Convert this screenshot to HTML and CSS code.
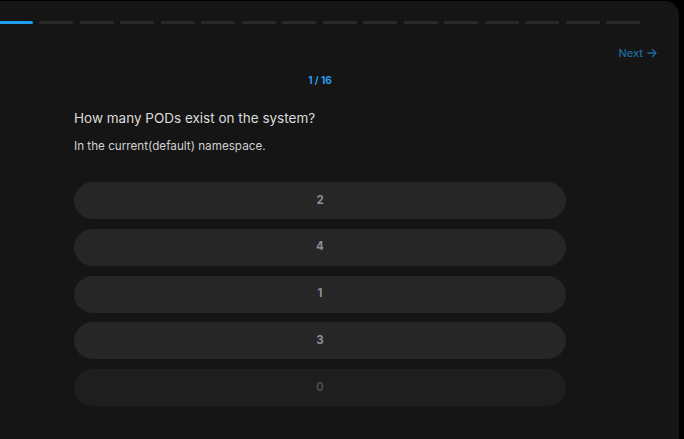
FILE: index.html
```html
<!DOCTYPE html>
<html lang="en">
<head>
<meta charset="utf-8">
<title>Quiz</title>
<link rel="stylesheet" href="styles.css">
</head>
<body>
<div class="card">
  <div class="progress">
    <span class="seg active"></span>
    <span class="seg"></span><span class="seg"></span><span class="seg"></span>
    <span class="seg"></span><span class="seg"></span><span class="seg"></span>
    <span class="seg"></span><span class="seg"></span><span class="seg"></span>
    <span class="seg"></span><span class="seg"></span><span class="seg"></span>
    <span class="seg"></span><span class="seg"></span><span class="seg"></span>
  </div>
  <div class="nav">
    <a class="next">Next
      <svg class="arrow" width="10" height="10" viewBox="0 0 10 10"><path d="M1 5h8M5.5 1.5 9 5 5.5 8.5" fill="none" stroke="currentColor" stroke-width="1.3" stroke-linecap="round" stroke-linejoin="round"/></svg>
    </a>
  </div>
  <div class="main">
    <div class="counter">1 / 16</div>
    <div class="quiz">
      <h1 class="question">How many PODs exist on the system?</h1>
      <p class="sub">In the current(default) namespace.</p>
      <div class="options">
        <button class="opt">2</button>
        <button class="opt">4</button>
        <button class="opt">1</button>
        <button class="opt">3</button>
        <button class="opt dim">0</button>
      </div>
    </div>
  </div>
</div>
</body>
</html>
```
FILE: styles.css
```css
html, body {
  margin: 0;
  padding: 0;
  background: #000;
  height: 100%;
  overflow: hidden;
}
body {
  font-family: Inter, "Noto Sans", sans-serif;
}
.card {
  margin-top: 1px;
  width: 679px;
  height: 438px;
  background: #151515;
  border-top-right-radius: 14px;
  box-sizing: border-box;
  padding-top: 20px;
}
.progress {
  display: flex;
  gap: 6.5px;
  width: 641px;
  margin-left: -1px;
}
.seg {
  flex: 1;
  height: 3px;
  border-radius: 2px;
  background: #2a2a2a;
}
.seg.active {
  background: #1e9ef0;
}
.nav {
  display: flex;
  justify-content: flex-end;
  padding-right: 22px;
  margin-top: 21px;
}
.next {
  display: flex;
  align-items: center;
  gap: 4px;
  font-size: 11px;
  line-height: 16px;
  font-weight: 500;
  color: #1c6b9e;
}
.arrow {
  display: block;
}
.main {
  width: 640px;
  display: flex;
  flex-direction: column;
  align-items: center;
}
.counter {
  margin-top: 11px;
  font-size: 10px;
  line-height: 16px;
  font-weight: 700;
  color: #2b9ef0;
}
.quiz {
  width: 492px;
  margin-top: 20px;
}
.question {
  margin: 0;
  font-size: 13.5px;
  line-height: 20px;
  font-weight: 400;
  color: #dcdcdc;
}
.sub {
  margin: 10px 0 0;
  font-size: 11.7px;
  line-height: 16px;
  color: #d0d0d0;
}
.options {
  margin-top: 28px;
  display: flex;
  flex-direction: column;
  gap: 9.8px;
}
.opt {
  height: 37px;
  border: none;
  border-radius: 19px;
  background: #262626;
  font-family: Inter, "Noto Sans", sans-serif;
  font-size: 11.5px;
  font-weight: 700;
  color: #8a8f97;
  padding: 0 0 2px;
}
.opt.dim {
  background: #1e1e1e;
  color: #4a4a4a;
}
```
